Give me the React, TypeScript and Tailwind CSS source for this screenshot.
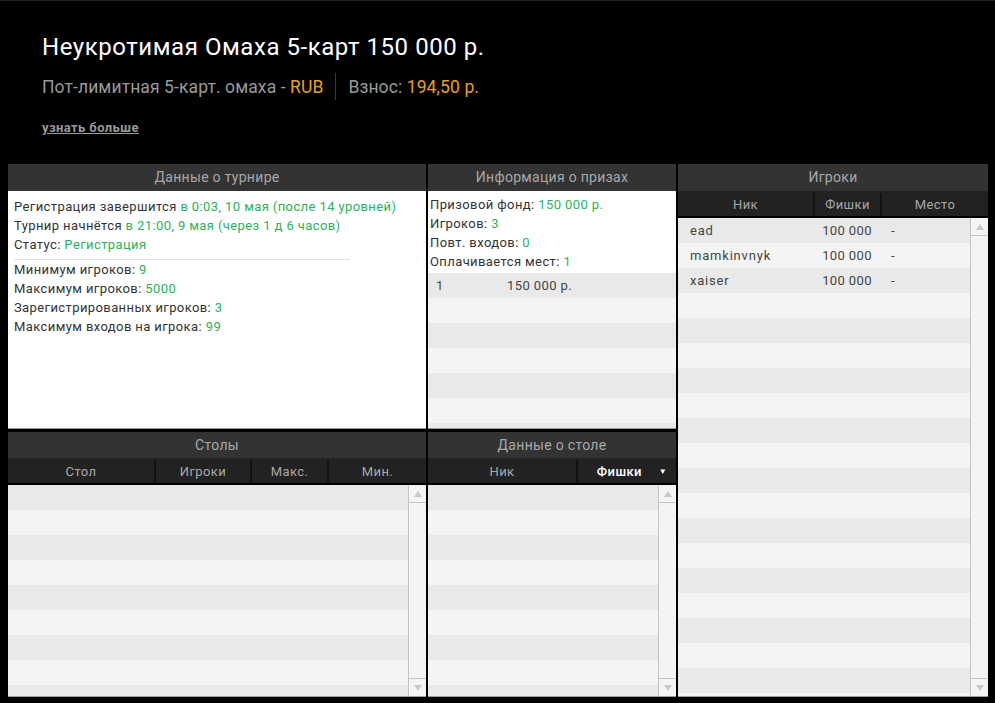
import React from "react";

const G = "text-[#2bb35a]";

function Scrollbar() {
  return (
    <div className="absolute right-0 top-0 bottom-0 w-[18px] bg-[#f4f4f4] border-l border-[#c4c4c4] flex flex-col justify-between">
      <div className="h-[18px] border-b border-[#c4c4c4] flex items-center justify-center">
        <svg width="8" height="6" viewBox="0 0 8 6"><path d="M4 0 L8 6 L0 6 Z" fill="#c8c8c8" /></svg>
      </div>
      <div className="h-[18px] border-t border-[#c4c4c4] flex items-center justify-center">
        <svg width="8" height="6" viewBox="0 0 8 6"><path d="M0 0 L8 0 L4 6 Z" fill="#c8c8c8" /></svg>
      </div>
    </div>
  );
}

function Rows({ count, children }: { count: number; children?: React.ReactNode[] }) {
  const rows = [];
  for (let i = 0; i < count; i++) {
    const dark = i % 2 === 0;
    rows.push(
      <div key={i} className={"h-[25px] shrink-0 flex items-center " + (dark ? "bg-[#e9e9e9]" : "bg-[#f4f4f4]")}>
        {children && children[i]}
      </div>
    );
  }
  return <>{rows}</>;
}

function PanelTitle({ children, h = "h-[27px]" }: { children: React.ReactNode; h?: string }) {
  return (
    <div className={h + " shrink-0 bg-[#333333] flex items-center justify-center text-[14px] text-[#a8a8a8] tracking-[0.3px]"}>
      {children}
    </div>
  );
}

export default function App() {
  const players = [
    ["ead", "100 000", "-"],
    ["mamkinvnyk", "100 000", "-"],
    ["xaiser", "100 000", "-"],
  ];
  return (
    <div className="w-[995px] h-[703px] bg-black border-t border-[#1e1e1e] overflow-hidden font-['Roboto',sans-serif]">
      {/* Header */}
      <div className="pl-[42px] pt-[30px] h-[163px]">
        <div className="text-[24px] text-white leading-[32px] tracking-[0.55px]">Неукротимая Омаха 5-карт 150 000 р.</div>
        <div className="mt-[10px] flex items-center text-[17.5px] text-[#9a9a9a] leading-[26px] tracking-[0.1px]">
          <span>
            Пот-лимитная 5-карт. омаха - <span className="text-[#e8a11c]">RUB</span>
          </span>
          <span className="mx-[12px] w-px h-[27px] bg-[#3a3a3a]" />
          <span>
            Взнос: <span className="text-[#e8a11c]">194,50 р.</span>
          </span>
        </div>
        <div className="mt-[20px] text-[13px] font-bold text-[#9a9a9a] underline leading-[16px] tracking-[0.4px]">узнать больше</div>
      </div>

      {/* Panels */}
      <div className="flex gap-[2px] ml-[8px] text-[13px] text-[#333] tracking-[0.4px]">
        {/* Left column */}
        <div className="w-[418px] flex flex-col gap-[3px]">
          <div className="h-[265px] flex flex-col">
            <PanelTitle>Данные о турнире</PanelTitle>
            <div className="flex-1 bg-white border-b border-[#9a9a9a] pl-[6px] pt-[6px] leading-[19px]">
              <div>
                Регистрация завершится <span className={G}>в 0:03, 10 мая (после 14 уровней)</span>
              </div>
              <div>
                Турнир начнётся <span className={G}>в 21:00, 9 мая (через 1 д 6 часов)</span>
              </div>
              <div>
                Статус: <span className={G}>Регистрация</span>
              </div>
              <div className="w-[336px] h-px bg-[#e2e2e2] mt-[5px]" />
              <div>
                Минимум игроков: <span className={G}>9</span>
              </div>
              <div>
                Максимум игроков: <span className={G}>5000</span>
              </div>
              <div>
                Зарегистрированных игроков: <span className={G}>3</span>
              </div>
              <div>
                Максимум входов на игрока: <span className={G}>99</span>
              </div>
            </div>
          </div>
          <div className="h-[265px] flex flex-col">
            <PanelTitle h="h-[26px]">Столы</PanelTitle>
            <div className="h-[27px] shrink-0 bg-[#222222] border-b-[2px] border-black flex text-[13px] text-[#a8a8a8] pt-[2px]">
              <div className="w-[148px] flex items-center justify-center border-r-[2px] border-[#111]">Стол</div>
              <div className="w-[96px] flex items-center justify-center border-r-[2px] border-[#111]">Игроки</div>
              <div className="w-[77px] flex items-center justify-center border-r-[2px] border-[#111]">Макс.</div>
              <div className="flex-1 flex items-center justify-center">Мин.</div>
            </div>
            <div className="relative flex-1 overflow-hidden flex flex-col border-b border-[#9a9a9a]">
              <Rows count={10} />
              <Scrollbar />
            </div>
          </div>
        </div>

        {/* Middle column */}
        <div className="w-[248px] flex flex-col gap-[3px]">
          <div className="h-[265px] flex flex-col">
            <PanelTitle>Информация о призах</PanelTitle>
            <div className="flex-1 flex flex-col bg-white border-b border-[#9a9a9a] overflow-hidden">
              <div className="pl-[2px] pt-[4px] pb-[2px] leading-[19px]">
                <div>
                  Призовой фонд: <span className={G}>150 000 р.</span>
                </div>
                <div>
                  Игроков: <span className={G}>3</span>
                </div>
                <div>
                  Повт. входов: <span className={G}>0</span>
                </div>
                <div>
                  Оплачивается мест: <span className={G}>1</span>
                </div>
              </div>
              <Rows
                count={7}
                children={[
                  <div key="p" className="flex text-[#444]">
                    <span className="w-[79px] pl-[8px]">1</span>
                    <span>150 000 р.</span>
                  </div>,
                ]}
              />
            </div>
          </div>
          <div className="h-[265px] flex flex-col">
            <PanelTitle h="h-[26px]">Данные о столе</PanelTitle>
            <div className="h-[27px] shrink-0 bg-[#222222] border-b-[2px] border-black flex text-[13px] pt-[2px]">
              <div className="w-[150px] flex items-center justify-center border-r-[2px] border-[#111] text-[#a8a8a8]">Ник</div>
              <div className="flex-1 flex items-center text-white font-medium">
                <span className="flex-1 text-center pl-[2px]">Фишки</span>
                <span className="text-[8px] pr-[9px]">▼</span>
              </div>
            </div>
            <div className="relative flex-1 overflow-hidden flex flex-col border-b border-[#9a9a9a]">
              <Rows count={10} />
              <Scrollbar />
            </div>
          </div>
        </div>

        {/* Right column */}
        <div className="w-[310px] h-[533px] flex flex-col">
          <PanelTitle>Игроки</PanelTitle>
          <div className="h-[27px] shrink-0 bg-[#222222] border-b-[2px] border-black flex text-[13px] text-[#a8a8a8] pt-[2px]">
            <div className="w-[137px] flex items-center justify-center border-r-[2px] border-[#111]">Ник</div>
            <div className="w-[67px] flex items-center justify-center border-r-[2px] border-[#111]">Фишки</div>
            <div className="flex-1 flex items-center justify-center">Место</div>
          </div>
          <div className="relative flex-1 overflow-hidden flex flex-col border-b border-[#9a9a9a]">
            <Rows
              count={20}
              children={players.map((p, i) => (
                <div key={i} className="flex w-full text-[#444]">
                  <span className="w-[130px] pl-[12px] tracking-[0.8px]">{p[0]}</span>
                  <span className="w-[64px] text-right">{p[1]}</span>
                  <span className="pl-[19px]">{p[2]}</span>
                </div>
              ))}
            />
            <Scrollbar />
          </div>
        </div>
      </div>
    </div>
  );
}
